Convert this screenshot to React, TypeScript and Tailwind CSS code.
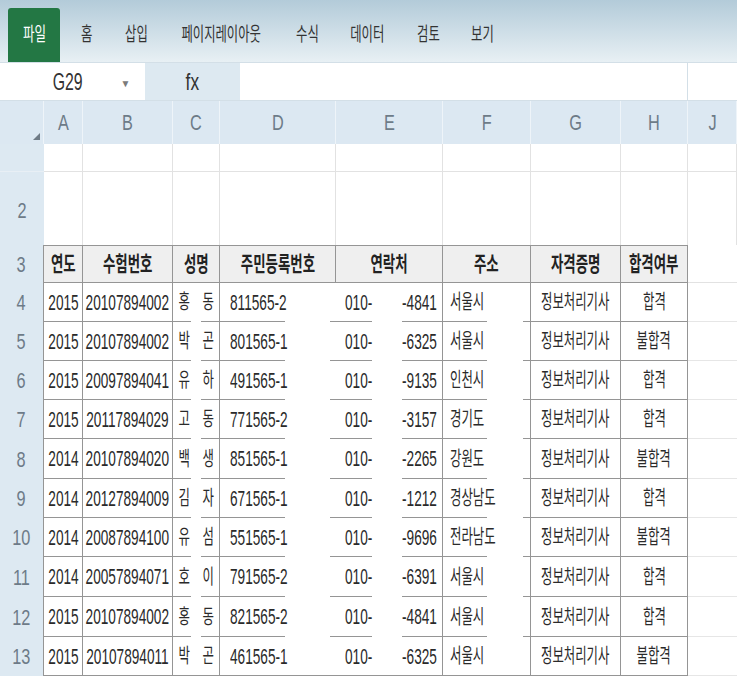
import React from "react";

type SqProps = { children: React.ReactNode; className?: string };

// 스크린샷 글자가 가로로 눌려 있어서 scale-x 로 맞춘다
function Sq({ children, className = "" }: SqProps) {
  return <span className={`inline-block shrink-0 whitespace-nowrap ${className}`}>{children}</span>;
}

const GRID = "grid grid-cols-[44px_39px_90px_47px_116px_107px_88px_90px_67px_49px]";

const menu = [
  { label: "홈", w: "w-[54px]" },
  { label: "삽입", w: "w-[44px]" },
  { label: "페이지레이아웃", w: "w-[126px]" },
  { label: "수식", w: "w-[46px]" },
  { label: "데이터", w: "w-[74px]" },
  { label: "검토", w: "w-[48px]" },
  { label: "보기", w: "w-[60px]" },
];

const letters = ["A", "B", "C", "D", "E", "F", "G", "H", "J"];
const heads = ["연도", "수험번호", "성명", "주민등록번호", "연락처", "주소", "자격증명", "합격여부"];

type Row = {
  n: number;
  year: string;
  id: string;
  first: string;
  last: string;
  rrn: string;
  tel: string;
  addr: string;
  result: string;
};

const rows: Row[] = [
  { n: 4, year: "2015", id: "20107894002", first: "홍", last: "동", rrn: "811565-2", tel: "-4841", addr: "서울시", result: "합격" },
  { n: 5, year: "2015", id: "20107894002", first: "박", last: "곤", rrn: "801565-1", tel: "-6325", addr: "서울시", result: "불합격" },
  { n: 6, year: "2015", id: "20097894041", first: "유", last: "하", rrn: "491565-1", tel: "-9135", addr: "인천시", result: "합격" },
  { n: 7, year: "2015", id: "20117894029", first: "고", last: "동", rrn: "771565-2", tel: "-3157", addr: "경기도", result: "합격" },
  { n: 8, year: "2014", id: "20107894020", first: "백", last: "생", rrn: "851565-1", tel: "-2265", addr: "강원도", result: "불합격" },
  { n: 9, year: "2014", id: "20127894009", first: "김", last: "자", rrn: "671565-1", tel: "-1212", addr: "경상남도", result: "합격" },
  { n: 10, year: "2014", id: "20087894100", first: "유", last: "섬", rrn: "551565-1", tel: "-9696", addr: "전라남도", result: "불합격" },
  { n: 11, year: "2014", id: "20057894071", first: "호", last: "이", rrn: "791565-2", tel: "-6391", addr: "서울시", result: "합격" },
  { n: 12, year: "2015", id: "20107894002", first: "홍", last: "동", rrn: "821565-2", tel: "-4841", addr: "서울시", result: "합격" },
  { n: 13, year: "2015", id: "20107894011", first: "박", last: "곤", rrn: "461565-1", tel: "-6325", addr: "서울시", result: "불합격" },
];

const rowHeights = ["h-[39px]", "h-[39px]", "h-[39px]", "h-[39px]", "h-[40px]", "h-[39px]", "h-[39px]", "h-[40px]", "h-[40px]", "h-[39px]"];

// 아래 테두리가 가려진 부분: [선, 빈칸, 선 ...] 마지막 조각은 나머지 폭
const SEGS: number[][] = [[0], [0], [18, 10, 0], [65, 45, 0], [36, 30, 0], [44, 36, 0], [0], [0]];

type CellProps = {
  segs: number[];
  full: boolean;
  right?: boolean;
  className?: string;
  children?: React.ReactNode;
};

function DataCell({ segs, full, right = true, className = "", children }: CellProps) {
  return (
    <div className={`flex min-w-0 flex-col ${right ? "border-r border-[#959595]" : ""}`}>
      <div className={`flex flex-1 items-center ${className}`}>{children}</div>
      <div className="flex h-px">
        {full
          ? <div className="flex-1 bg-[#959595]" />
          : segs.map((w, i) =>
              i === segs.length - 1 ? (
                <div key={i} className={`flex-1 ${i % 2 === 0 ? "bg-[#959595]" : ""}`} />
              ) : (
                <div key={i} className={`shrink-0 ${i % 2 === 0 ? "bg-[#959595]" : ""}`} style={{ width: w }} />
              ),
            )}
      </div>
    </div>
  );
}

const num = "text-[22px] scale-x-[0.62]";
const kor = "text-[20px] scale-x-[0.62]";
const label = "origin-center scale-x-[0.74] text-[22px] text-[#6d7b88]";

export default function App() {
  return (
    <div className="h-[676px] w-[737px] overflow-hidden bg-white font-['Liberation_Sans','Noto_Sans_CJK_KR',sans-serif] text-[#2a2a2a]">
      {/* 리본 메뉴 */}
      <div className="flex h-[62px] items-end bg-linear-to-b from-[#b3cbd9] to-[#e8f0f4] pl-2">
        <div className="flex h-[54px] w-[52px] items-center justify-center rounded-t-[3px] bg-[#237744] text-white">
          <Sq className="origin-center scale-x-[0.66] text-[19px]">파일</Sq>
        </div>
        {menu.map((m) => (
          <div key={m.label} className={`flex h-[54px] items-center justify-center ${m.w}`}>
            <Sq className="origin-center scale-x-[0.65] text-[19px] text-[#333]">{m.label}</Sq>
          </div>
        ))}
      </div>

      {/* 수식 입력줄 */}
      <div className="flex h-[39px] border-y border-[#d3dfe7] bg-white">
        <div className="flex w-[145px] items-center">
          <Sq className="ml-[45px] origin-center scale-x-[0.66] text-[24px] text-[#333]">G29</Sq>
          <span className="ml-[30px] mt-[4px] text-[10px] text-[#7b7b7b]">▼</span>
        </div>
        <div className="flex w-[95px] items-center justify-center bg-[#dde9f1]">
          <Sq className="origin-center scale-x-[0.72] text-[24px] text-[#333]">fx</Sq>
        </div>
        <div className="w-[448px] border-r border-[#d3dfe7]" />
        <div className="flex-1" />
      </div>

      {/* 열 머리글 */}
      <div className={`${GRID} h-[43px] bg-[#dce8f2]`}>
        <div className="flex items-end justify-end border-r border-[#eef4f9] pb-[4px] pr-[3px]">
          <svg width="7" height="7" viewBox="0 0 7 7">
            <polygon points="7,0 7,7 0,7" fill="#6f7b86" />
          </svg>
        </div>
        {letters.map((l) => (
          <div key={l} className="flex items-center justify-center border-r border-[#eef4f9]">
            <Sq className={label}>{l}</Sq>
          </div>
        ))}
      </div>

      {/* 1행 */}
      <div className={`${GRID} h-[28px]`}>
        <div className="border-b border-[#e8eff5] bg-[#dde9f2]" />
        {letters.map((l) => (
          <div key={l} className="border-r border-b border-[#e2e2e2]" />
        ))}
      </div>

      {/* 2행 */}
      <div className={`${GRID} h-[73px]`}>
        <div className="flex items-center justify-center bg-[#dde9f2] pt-[4px]">
          <Sq className={label}>2</Sq>
        </div>
        {letters.map((l) => (
          <div key={l} className="border-r border-[#e2e2e2]" />
        ))}
      </div>

      {/* 3행: 제목 */}
      <div className={`${GRID} h-[38px]`}>
        <div className="flex items-center justify-center border-r border-[#959595] bg-[#dde9f2]">
          <Sq className={label}>3</Sq>
        </div>
        {heads.map((h) => (
          <div key={h} className="flex items-center justify-center border-y border-r border-[#959595] bg-[#efefef]">
            <Sq className="origin-center scale-x-[0.64] text-[21px] font-bold text-[#222]">{h}</Sq>
          </div>
        ))}
        <div className="border-b border-[#e2e2e2]" />
      </div>

      {/* 데이터 */}
      {rows.map((r, i) => {
        const full = i === rows.length - 1;
        return (
          <div key={r.n} className={`${GRID} ${rowHeights[i]}`}>
            <div className="flex items-center justify-center border-r border-[#959595] bg-[#dde9f2]">
              <Sq className={label}>{r.n}</Sq>
            </div>
            <DataCell segs={SEGS[0]} full={full} className="justify-center">
              <Sq className={`origin-center ${num}`}>{r.year}</Sq>
            </DataCell>
            <DataCell segs={SEGS[1]} full={full} className="justify-center">
              <Sq className={`origin-center ${num}`}>{r.id}</Sq>
            </DataCell>
            <DataCell segs={SEGS[2]} full={full} className="justify-between pl-[2px] pr-[2px]">
              <Sq className={`origin-center ${kor}`}>{r.first}</Sq>
              <Sq className={`origin-center ${kor}`}>{r.last}</Sq>
            </DataCell>
            <DataCell segs={SEGS[3]} full={full} right={false} className="pl-[10px]">
              <Sq className={`origin-left ${num}`}>{r.rrn}</Sq>
            </DataCell>
            <DataCell segs={SEGS[4]} full={full} className="pl-[9px]">
              <Sq className={`w-[57px] origin-left ${num}`}>010-</Sq>
              <Sq className={`origin-left ${num}`}>{r.tel}</Sq>
            </DataCell>
            <DataCell segs={SEGS[5]} full={full} className="pl-[7px]">
              <Sq className={`origin-left ${kor}`}>{r.addr}</Sq>
            </DataCell>
            <DataCell segs={SEGS[6]} full={full} className="justify-center">
              <Sq className={`origin-center ${kor}`}>정보처리기사</Sq>
            </DataCell>
            <DataCell segs={SEGS[7]} full={full} className="justify-center">
              <Sq className={`origin-center ${kor}`}>{r.result}</Sq>
            </DataCell>
            <div className="border-b border-[#e6e6e6]" />
          </div>
        );
      })}
    </div>
  );
}
